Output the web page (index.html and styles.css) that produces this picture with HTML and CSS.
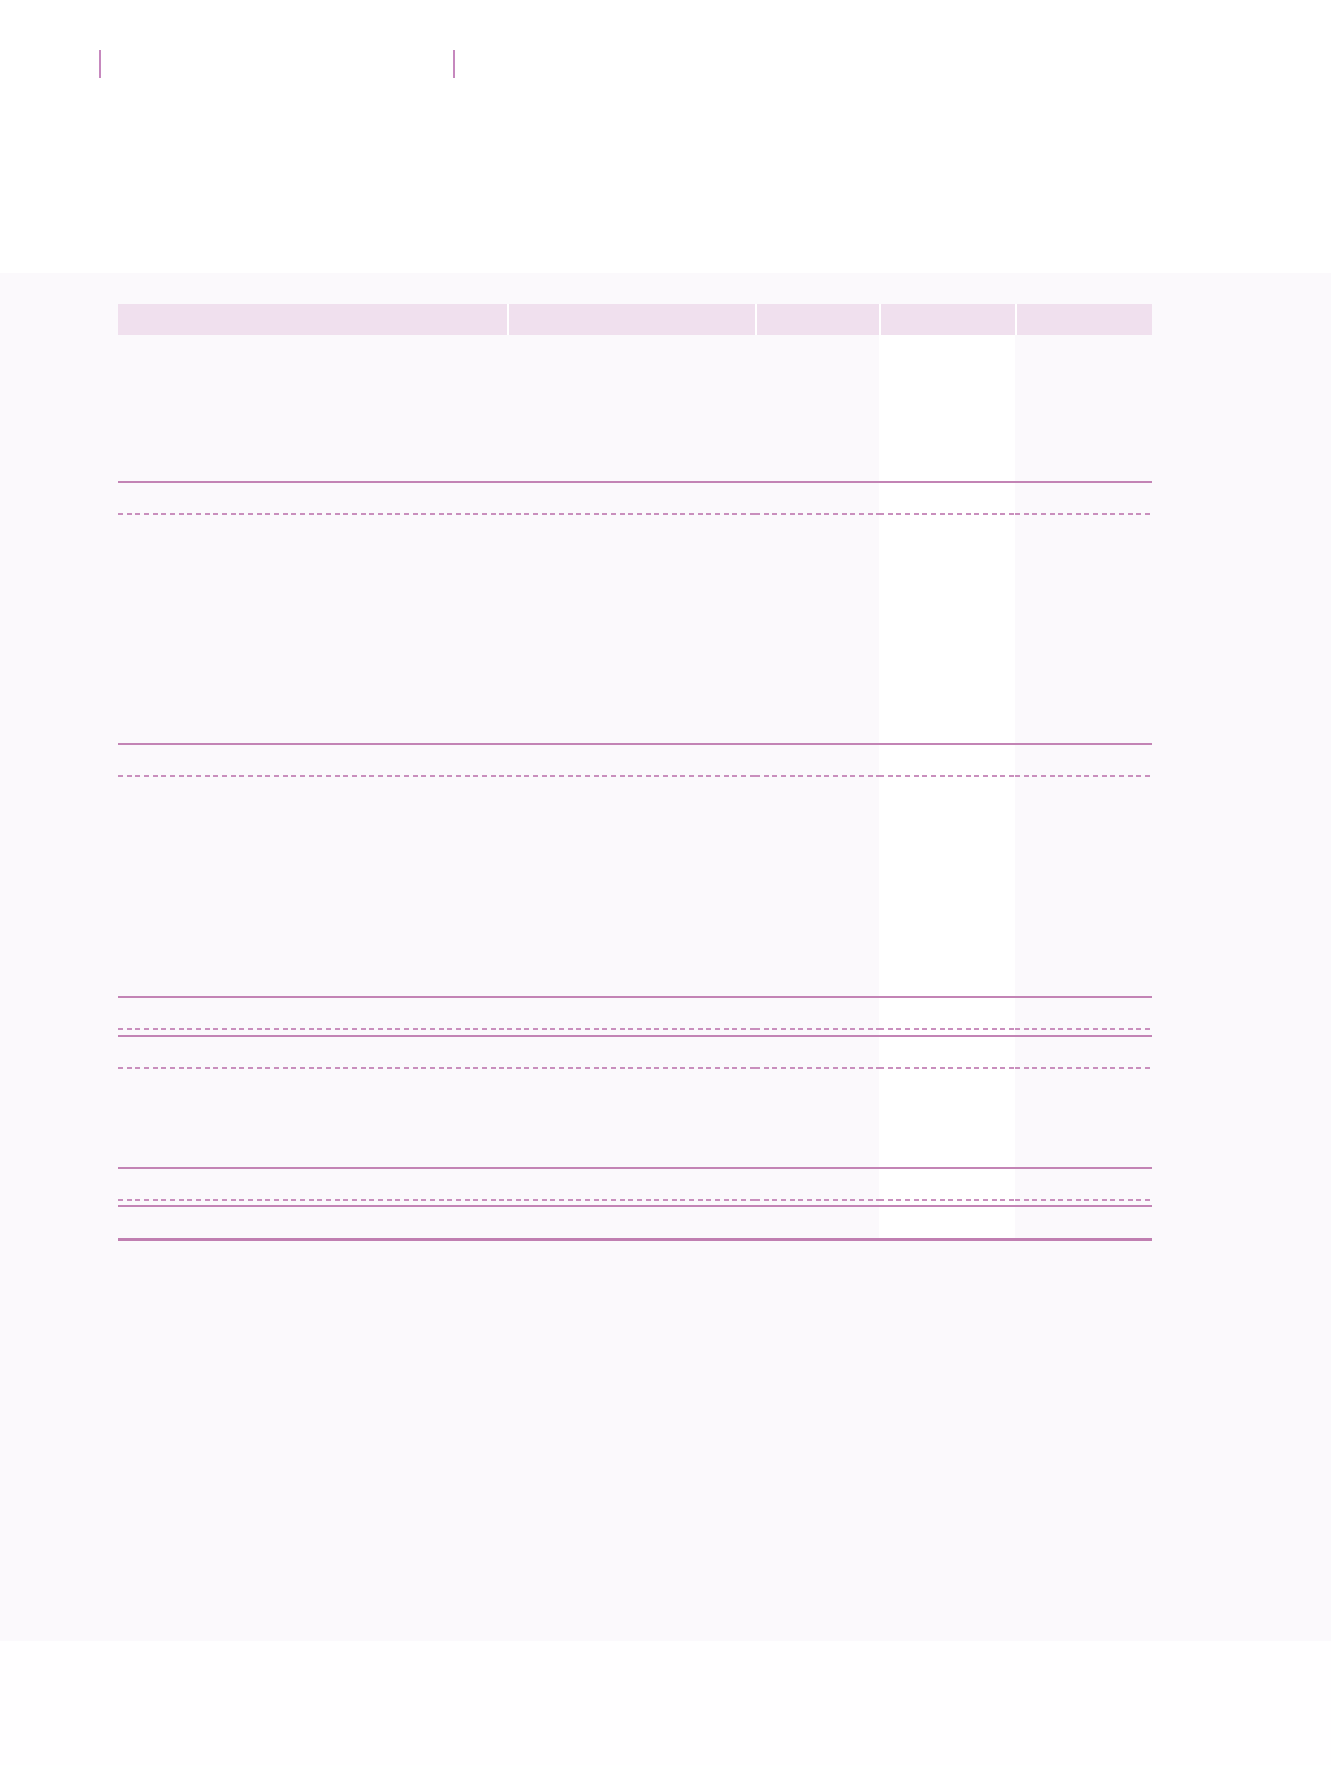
FILE: index.html
```html
<!DOCTYPE html>
<html lang="en">
<head>
<meta charset="utf-8">
<title>Statement</title>
<link rel="stylesheet" href="styles.css">
</head>
<body>
<header class="top">
  <div class="marks">
    <div class="mark mark-wide"></div>
    <div class="mark"></div>
  </div>
</header>
<main class="sheet">
  <table class="ledger">
    <colgroup>
      <col class="c1"><col class="c2"><col class="c3"><col class="c4"><col class="c5">
    </colgroup>
    <thead>
      <tr><th></th><th></th><th></th><th></th><th></th></tr>
    </thead>
    <tbody>
      <tr class="block block-a"><td></td><td></td><td></td><td></td><td></td></tr>
      <tr class="sub"><td></td><td></td><td></td><td></td><td></td></tr>
      <tr class="block block-b"><td></td><td></td><td></td><td></td><td></td></tr>
      <tr class="sub"><td></td><td></td><td></td><td></td><td></td></tr>
      <tr class="block block-c"><td></td><td></td><td></td><td></td><td></td></tr>
      <tr class="sub"><td></td><td></td><td></td><td></td><td></td></tr>
      <tr class="spacer"><td></td><td></td><td></td><td></td><td></td></tr>
      <tr class="sub"><td></td><td></td><td></td><td></td><td></td></tr>
      <tr class="block block-d"><td></td><td></td><td></td><td></td><td></td></tr>
      <tr class="sub"><td></td><td></td><td></td><td></td><td></td></tr>
      <tr class="spacer spacer-sm"><td></td><td></td><td></td><td></td><td></td></tr>
      <tr class="grand"><td></td><td></td><td></td><td></td><td></td></tr>
    </tbody>
  </table>
</main>
<footer class="foot"></footer>
</body>
</html>
```

FILE: styles.css
```css
html, body {
  margin: 0;
  padding: 0;
  background: #ffffff;
  font-family: "Liberation Sans", Arial, sans-serif;
}

.top {
  height: 273px;
  box-sizing: border-box;
  padding: 50px 0 0 99px;
  background: #ffffff;
}

.marks {
  display: flex;
}

.mark {
  width: 0;
  height: 28px;
  border-left: 2px solid #c688be;
}

.mark-wide {
  width: 352px;
}

.sheet {
  height: 1368px;
  box-sizing: border-box;
  padding: 31px 0 0 118px;
  background: #fbf9fc;
}

.ledger {
  width: 1034px;
  table-layout: fixed;
  border-collapse: separate;
  border-spacing: 0;
}

.c1 { width: 389px; }
.c2 { width: 248px; }
.c3 { width: 124px; }
.c4 { width: 136px; }
.c5 { width: 137px; }

.ledger th {
  height: 31px;
  padding: 0;
  background: #f0e0ee;
  border-left: 2px solid #ffffff;
  box-sizing: border-box;
}

.ledger th:first-child {
  border-left: 0;
}

.ledger td {
  padding: 0;
  box-sizing: border-box;
}

.ledger td:nth-child(4) {
  background-color: #ffffff;
}

.ledger td:nth-child(5) {
  background-color: #fbf9fc;
}

.block-a td { height: 146px; }
.block-b td { height: 228px; }
.block-c td { height: 219px; }
.block-d td { height: 98px; }

.spacer td { height: 5px; }
.spacer-sm td { height: 4px; }

.sub td {
  height: 34px;
  border-top: 2px solid #c384b5;
  padding-bottom: 2px;
  background-image: repeating-linear-gradient(to right, #c98fbd 0, #c98fbd 5px, transparent 5px, transparent 8.67px);
  background-size: 100% 2px;
  background-position: left bottom;
  background-repeat: no-repeat;
}

.grand td {
  height: 36px;
  border-top: 2px solid #c384b5;
  border-bottom: 3px solid #c07fb1;
}

.foot {
  height: 124px;
  background: #fffeff;
}
```
